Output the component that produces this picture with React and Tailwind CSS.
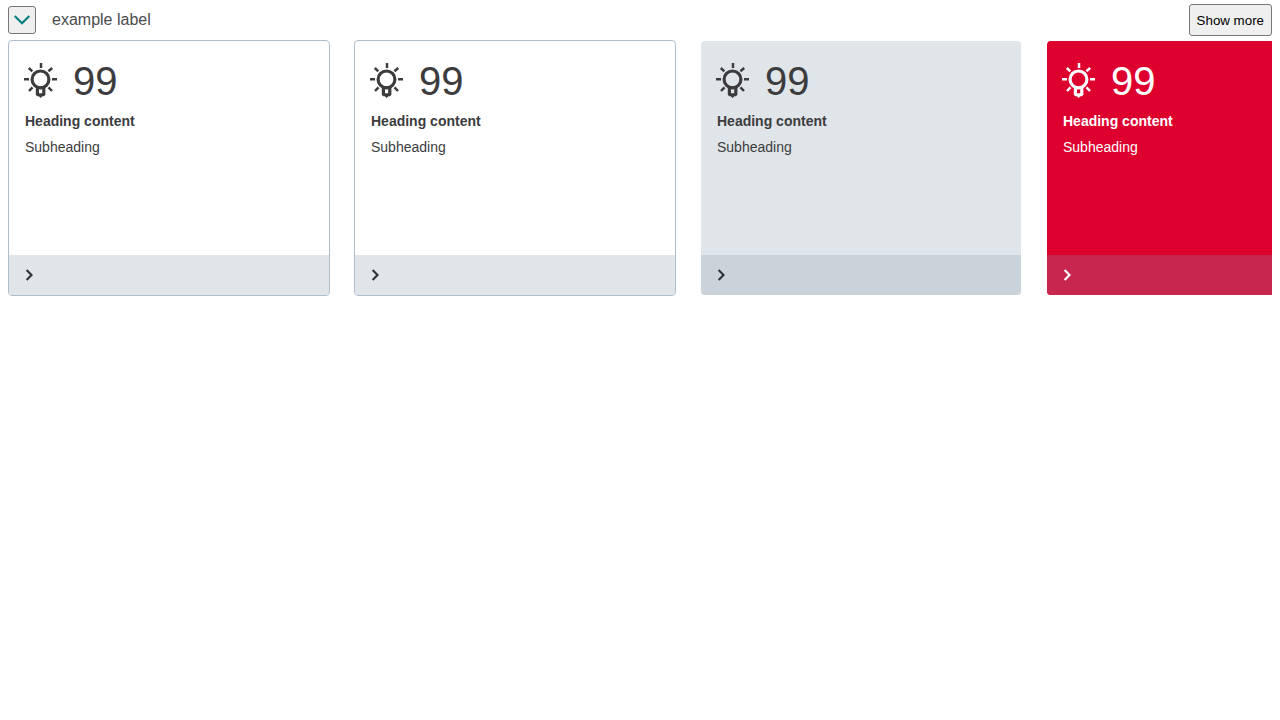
const cards = [
  { card: "rounded border-[#adbdcc] bg-white text-[#3c3c3e]", footer: "bg-[#e0e5e9] text-[#2f3439]" },
  { card: "rounded border-[#adbdcc] bg-white text-[#3c3c3e]", footer: "bg-[#e0e5e9] text-[#2f3439]" },
  { card: "rounded-[5px] border-transparent bg-[#e0e5e9] text-[#3c3c3e]", footer: "bg-[#cad2da] text-[#2f3439]" },
  { card: "rounded-[5px] border-transparent bg-[#dd002f] text-white", footer: "bg-[#c7264e] text-white" },
];

function Bulb() {
  return (
    <svg className="-mx-0.5 mb-0.5 size-9 shrink-0" viewBox="0 0 36 36" fill="none" stroke="currentColor">
      <circle cx="17.5" cy="17.4" r="8.4" strokeWidth="3.2" />
      <path
        d="M18 1v5M1 17.2h5M29 17.2h5M5.8 6l3.5 3.3M29.2 6l-3.8 3.3M6 29l3.5-3.7M29 29l-3.5-3.7"
        strokeWidth="2.5"
      />
      <path
        fill="currentColor"
        stroke="none"
        fillRule="evenodd"
        d="M12.8 24.5h9.6v8.2l-1.4 1.5h-1.6L17.6 36l-1.8-1.8h-1.6l-1.4-1.5zM16 27.1v4.1h3.2v-4.1z"
      />
    </svg>
  );
}

function Card({ card, footer }) {
  return (
    <article className={`flex h-64 w-[322px] shrink-0 flex-col overflow-hidden border bg-clip-padding ${card}`}>
      <div className="flex-1 px-4 pt-4">
        <div className="flex h-12 items-center gap-4">
          <Bulb />
          <span className="text-[40px] leading-12">99</span>
        </div>
        <h3 className="mt-1.5 text-sm leading-5 font-bold">Heading content</h3>
        <p className="mt-1.5 text-sm leading-5">Subheading</p>
      </div>
      <div className={`flex h-10 items-center px-4 ${footer}`}>
        <svg className="h-3 w-2" viewBox="0 0 8 12" fill="none" stroke="currentColor" strokeWidth="2.15">
          <path d="M1.6 1.1L6.5 6L1.6 10.9" />
        </svg>
      </div>
    </article>
  );
}

export default function App() {
  return (
    <main className="min-h-screen bg-white px-2 font-['Liberation_Sans',Arial,sans-serif]">
      <header className="flex h-10 items-center">
        <button
          aria-label="Toggle"
          className="flex size-7 items-center justify-center rounded-[3px] border border-[#767676] bg-[#efefef] text-[#007f7b]"
        >
          <svg className="h-2.5 w-4" viewBox="0 0 16 10" fill="none" stroke="currentColor" strokeWidth="2.1">
            <path d="M.7 1L8 8.3L15.3 1" />
          </svg>
        </button>
        <span className="ml-4 text-base text-[#4b4b4d]">example label</span>
        <button className="ml-auto h-8 rounded-[3px] border border-[#767676] bg-[#efefef] px-[7px] pt-0.5 text-[13.333px] text-black">
          Show more
        </button>
      </header>
      <section className="flex gap-6 overflow-hidden">
        {cards.map((style, index) => (
          <Card key={index} {...style} />
        ))}
      </section>
    </main>
  );
}
